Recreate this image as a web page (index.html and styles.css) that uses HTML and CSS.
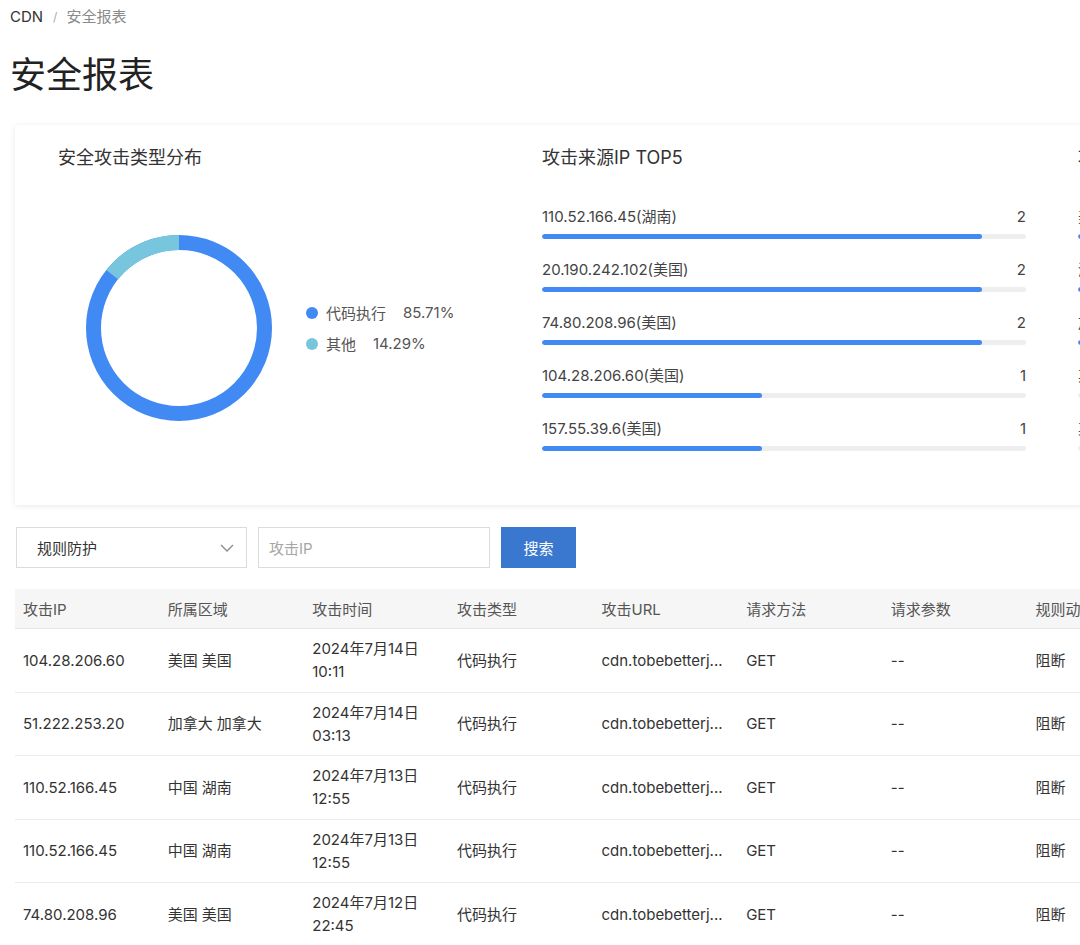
FILE: index.html
```html
<!DOCTYPE html>
<html lang="zh-CN">
<head>
<meta charset="utf-8">
<title>安全报表</title>
<link rel="stylesheet" href="styles.css">
</head>
<body>
<div class="page">
  <div class="crumbs">
    <span class="crumb-root">CDN</span>
    <span class="crumb-sep">/</span>
    <span class="crumb-cur">安全报表</span>
  </div>
  <h1 class="page-title">安全报表</h1>

  <div class="card">
    <section class="panel panel-donut">
      <h2 class="panel-title">安全攻击类型分布</h2>
      <div class="donut-body">
        <svg class="donut" width="186" height="186" viewBox="0 0 186 186">
          <circle cx="93" cy="93" r="85.5" fill="none" stroke="#418af4" stroke-width="15"/>
          <path d="M93 7.5 A85.5 85.5 0 0 0 26.15 39.69" fill="none" stroke="#77c6de" stroke-width="15"/>
        </svg>
        <ul class="legend">
          <li class="legend-item"><span class="dot dot-blue"></span><span class="legend-name">代码执行</span><span class="legend-val">85.71%</span></li>
          <li class="legend-item"><span class="dot dot-cyan"></span><span class="legend-name">其他</span><span class="legend-val">14.29%</span></li>
        </ul>
      </div>
    </section>

    <section class="panel panel-bars">
      <h2 class="panel-title">攻击来源IP TOP5</h2>
      <div class="bars">
        <div class="bar-row"><div class="bar-head"><span>110.52.166.45(湖南)</span><span>2</span></div><div class="track"><div class="fill" style="width:90.9%"></div></div></div>
        <div class="bar-row"><div class="bar-head"><span>20.190.242.102(美国)</span><span>2</span></div><div class="track"><div class="fill" style="width:90.9%"></div></div></div>
        <div class="bar-row"><div class="bar-head"><span>74.80.208.96(美国)</span><span>2</span></div><div class="track"><div class="fill" style="width:90.9%"></div></div></div>
        <div class="bar-row"><div class="bar-head"><span>104.28.206.60(美国)</span><span>1</span></div><div class="track"><div class="fill" style="width:45.45%"></div></div></div>
        <div class="bar-row"><div class="bar-head"><span>157.55.39.6(美国)</span><span>1</span></div><div class="track"><div class="fill" style="width:45.45%"></div></div></div>
      </div>
    </section>

    <section class="panel panel-bars">
      <h2 class="panel-title">攻击来源区域 TOP5</h2>
      <div class="bars">
        <div class="bar-row"><div class="bar-head"><span>美国</span><span>4</span></div><div class="track"><div class="fill" style="width:90.9%"></div></div></div>
        <div class="bar-row"><div class="bar-head"><span>湖南</span><span>2</span></div><div class="track"><div class="fill" style="width:45.45%"></div></div></div>
        <div class="bar-row"><div class="bar-head"><span>加拿大</span><span>1</span></div><div class="track"><div class="fill" style="width:22.7%"></div></div></div>
        <div class="bar-row"><div class="bar-head"><span>其他</span><span>0</span></div><div class="track"><div class="fill" style="width:0%"></div></div></div>
        <div class="bar-row"><div class="bar-head"><span>其他</span><span>0</span></div><div class="track"><div class="fill" style="width:0%"></div></div></div>
      </div>
    </section>
  </div>

  <div class="filters">
    <div class="select">
      <span>规则防护</span>
      <svg class="chev" width="14" height="8" viewBox="0 0 14 8"><path d="M1 1 L7 7 L13 1" fill="none" stroke="#8a8a8a" stroke-width="1.3"/></svg>
    </div>
    <div class="input"><span class="placeholder">攻击IP</span></div>
    <button class="btn">搜索</button>
  </div>

  <table class="grid">
    <thead>
      <tr><th>攻击IP</th><th>所属区域</th><th>攻击时间</th><th>攻击类型</th><th>攻击URL</th><th>请求方法</th><th>请求参数</th><th>规则动作</th></tr>
    </thead>
    <tbody>
      <tr><td>104.28.206.60</td><td>美国 美国</td><td>2024年7月14日<br>10:11</td><td>代码执行</td><td>cdn.tobebetterj...</td><td>GET</td><td>--</td><td>阻断</td></tr>
      <tr><td>51.222.253.20</td><td>加拿大 加拿大</td><td>2024年7月14日<br>03:13</td><td>代码执行</td><td>cdn.tobebetterj...</td><td>GET</td><td>--</td><td>阻断</td></tr>
      <tr><td>110.52.166.45</td><td>中国 湖南</td><td>2024年7月13日<br>12:55</td><td>代码执行</td><td>cdn.tobebetterj...</td><td>GET</td><td>--</td><td>阻断</td></tr>
      <tr><td>110.52.166.45</td><td>中国 湖南</td><td>2024年7月13日<br>12:55</td><td>代码执行</td><td>cdn.tobebetterj...</td><td>GET</td><td>--</td><td>阻断</td></tr>
      <tr><td>74.80.208.96</td><td>美国 美国</td><td>2024年7月12日<br>22:45</td><td>代码执行</td><td>cdn.tobebetterj...</td><td>GET</td><td>--</td><td>阻断</td></tr>
    </tbody>
  </table>
</div>
</body>
</html>
```

FILE: styles.css
```css
html, body {
  margin: 0;
  padding: 0;
  background: #ffffff;
  overflow: hidden;
  height: 100%;
}
body {
  font-family: Inter, "Noto Sans CJK SC", sans-serif;
  color: #333;
  font-size: 15px;
}
.page {
  padding: 7px 0 0 15px;
}
.crumbs {
  margin-left: -5px;
  font-size: 15px;
  line-height: 20px;
  display: flex;
  align-items: center;
}
.crumb-root { color: #333; }
.crumb-sep { color: #aaa; font-size: 12px; margin: 0 9px 0 10px; }
.crumb-cur { color: #8a8a8a; }
.page-title {
  margin: 24px 0 0 -5px;
  font-size: 36px;
  line-height: 48px;
  font-weight: 400;
  color: #222;
}
.card {
  margin-top: 26px;
  width: max-content;
  height: 380px;
  box-sizing: border-box;
  display: flex;
  background: #fff;
  box-shadow: 0 1px 6px rgba(0,0,0,0.09);
  padding-top: 22px;
}
.panel { flex-shrink: 0; }
.panel-donut { width: 527px; box-sizing: border-box; padding-left: 43px; }
.panel-bars { width: 536px; box-sizing: border-box; padding-right: 52px; }
.panel-title {
  margin: 0;
  font-size: 18px;
  line-height: 22px;
  font-weight: 400;
  color: #333;
}
.donut-body {
  margin-top: 66px;
  margin-left: 28px;
  display: flex;
  align-items: center;
}
.donut { display: block; }
.legend {
  list-style: none;
  margin: 0 0 0 34px;
  padding: 0;
}
.legend-item {
  display: flex;
  align-items: center;
  height: 31px;
  color: #555;
  font-size: 15px;
}
.dot {
  width: 12px;
  height: 12px;
  border-radius: 50%;
  margin-right: 8px;
}
.dot-blue { background: #418af4; }
.dot-cyan { background: #77c6de; }
.legend-val { margin-left: 17px; }

.bars { margin-top: 38px; }
.bar-row { margin-bottom: 21px; }
.bar-head {
  display: flex;
  justify-content: space-between;
  font-size: 15px;
  line-height: 20px;
  color: #444;
}
.track {
  margin-top: 7px;
  height: 5px;
  border-radius: 3px;
  background: #eeeeee;
  overflow: hidden;
}
.fill {
  height: 100%;
  background: #418af4;
  border-radius: 3px;
}

.filters {
  margin-top: 22px;
  margin-left: 1px;
  display: flex;
  gap: 11px;
}
.select {
  width: 231px;
  height: 41px;
  box-sizing: border-box;
  border: 1px solid #dcdcdc;
  display: flex;
  align-items: center;
  justify-content: space-between;
  padding: 0 12px 0 20px;
  font-size: 15px;
  color: #333;
}
.input {
  width: 232px;
  height: 41px;
  box-sizing: border-box;
  border: 1px solid #dcdcdc;
  display: flex;
  align-items: center;
  padding-left: 10px;
  font-size: 15px;
}
.placeholder { color: #a6a6a6; }
.btn {
  width: 75px;
  height: 41px;
  border: none;
  background: #3a78cf;
  color: #fff;
  font-family: inherit;
  font-size: 15px;
  padding: 0;
}

.grid {
  margin-top: 21px;
  width: 1157px;
  table-layout: fixed;
  border-collapse: collapse;
  font-size: 15px;
}
.grid th {
  height: 39px;
  background: #f6f6f6;
  text-align: left;
  font-weight: 400;
  color: #555;
  padding: 0 8px;
  border-bottom: 1px solid #e6e6e6;
}
.grid td {
  height: 62.5px;
  padding: 0 8px;
  line-height: 23px;
  color: #333;
  border-bottom: 1px solid #ebebeb;
  white-space: nowrap;
  overflow: hidden;
}
```
